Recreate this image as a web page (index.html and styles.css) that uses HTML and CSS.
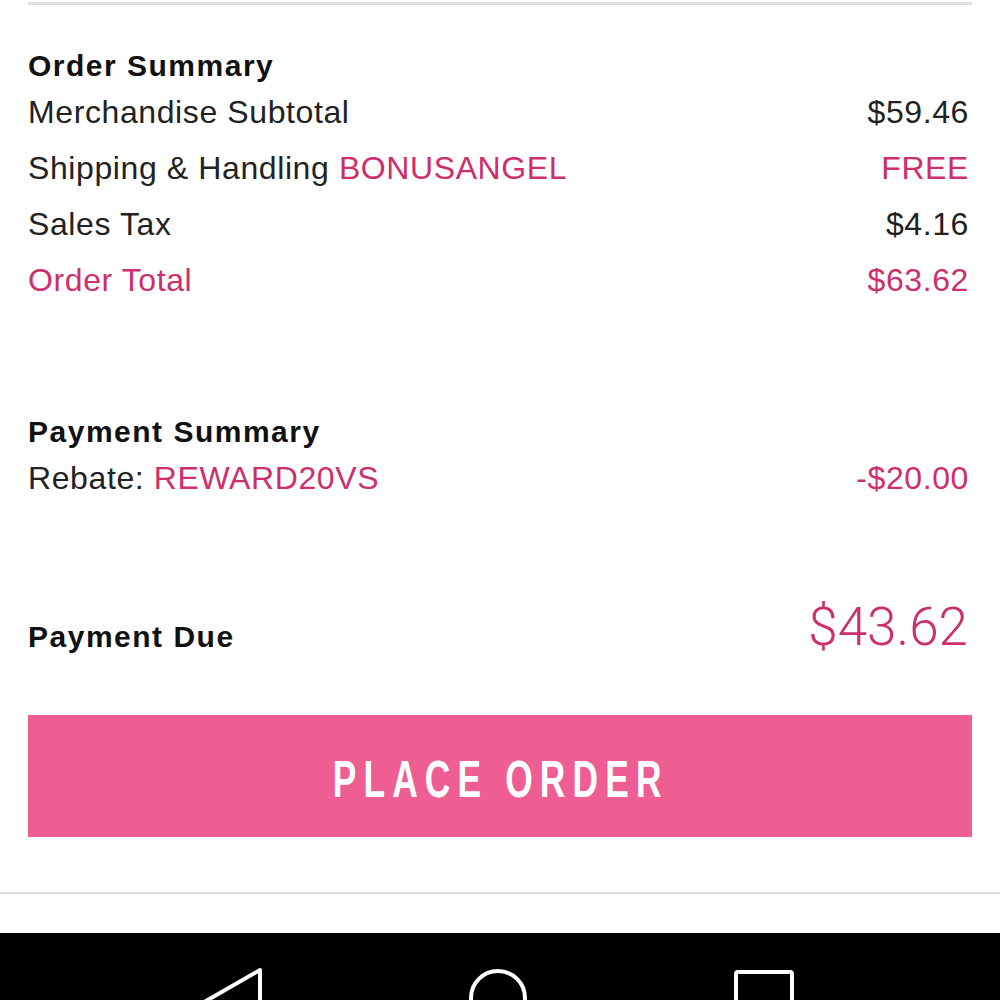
FILE: index.html
```html
<!DOCTYPE html>
<html lang="en">
<head>
    <meta charset="UTF-8">
    <meta name="viewport" content="width=device-width, initial-scale=1.0">
    <title>Checkout</title>
    <link rel="stylesheet" href="styles.css">
</head>
<body>
    <div class="top-rule"></div>

    <section class="summary order-summary">
        <h2>Order Summary</h2>
        <div class="row"><span>Merchandise Subtotal</span><span>$59.46</span></div>
        <div class="row"><span>Shipping &amp; Handling <span class="accent">BONUSANGEL</span></span><span class="accent">FREE</span></div>
        <div class="row"><span>Sales Tax</span><span>$4.16</span></div>
        <div class="row accent"><span>Order Total</span><span>$63.62</span></div>
    </section>

    <section class="summary payment-summary">
        <h2>Payment Summary</h2>
        <div class="row"><span>Rebate: <span class="accent">REWARD20VS</span></span><span class="accent">-$20.00</span></div>
    </section>

    <div class="due-row">
        <span class="due-label">Payment Due</span>
        <span class="due-amount">$43.62</span>
    </div>

    <button class="place-order"><span>PLACE ORDER</span></button>

    <div class="bottom-rule"></div>

    <!-- Android system navigation bar -->
    <nav class="system-nav">
        <svg width="1000" height="67" viewBox="0 0 1000 67">
            <polygon points="260,37 206,68 260,99" fill="none" stroke="#fff" stroke-width="4" stroke-linejoin="round"/>
            <circle cx="498" cy="65" r="27" fill="none" stroke="#fff" stroke-width="4"/>
            <rect x="736" y="39" width="56" height="56" rx="2" fill="none" stroke="#fff" stroke-width="4"/>
        </svg>
    </nav>
</body>
</html>
```

FILE: styles.css
```css
body {
    margin: 0;
    background-color: #fff;
    color: #222;
    font-family: "Liberation Sans", Arial, sans-serif;
}
.top-rule {
    margin: 2px 28px 0;
    height: 3px;
    background-color: #e0e0e0;
}
.summary {
    padding: 0 31px 0 28px;
}
.order-summary {
    margin-top: 43px;
}
.payment-summary {
    margin-top: 106px;
}
.summary h2 {
    margin: 0;
    font-size: 30px;
    line-height: 36px;
    font-weight: bold;
    letter-spacing: 1.5px;
    color: #111;
}
.row {
    display: flex;
    justify-content: space-between;
    height: 56px;
    line-height: 56px;
    font-size: 32px;
    letter-spacing: 0.6px;
}
.accent {
    color: #cc2f6c;
}
.due-row {
    display: flex;
    justify-content: space-between;
    align-items: flex-end;
    margin-top: 91px;
    padding: 0 32px 0 28px;
}
.due-label {
    font-size: 30px;
    line-height: 40px;
    font-weight: bold;
    letter-spacing: 1.5px;
    color: #111;
}
.due-amount {
    font-family: Roboto, "Liberation Sans", sans-serif;
    font-weight: 300;
    font-size: 53px;
    line-height: 60px;
    color: #cc2f6c;
}
.place-order {
    display: block;
    width: calc(100% - 56px);
    height: 122px;
    margin: 58px 28px 0;
    padding: 6px 0 0;
    border: 0;
    background-color: #ee5e92;
    color: #fff;
    font-family: "Liberation Sans", Arial, sans-serif;
    font-weight: bold;
    font-size: 52px;
    line-height: 60px;
    letter-spacing: 10.5px;
}
.place-order span {
    display: inline-block;
    padding-left: 2px;
    transform: scaleX(0.68);
}
.bottom-rule {
    margin-top: 55px;
    height: 2px;
    background-color: #dcdcdc;
}
.system-nav {
    margin-top: 39px;
    height: 67px;
    background-color: #000;
    overflow: hidden;
}
.system-nav svg {
    display: block;
}
```
